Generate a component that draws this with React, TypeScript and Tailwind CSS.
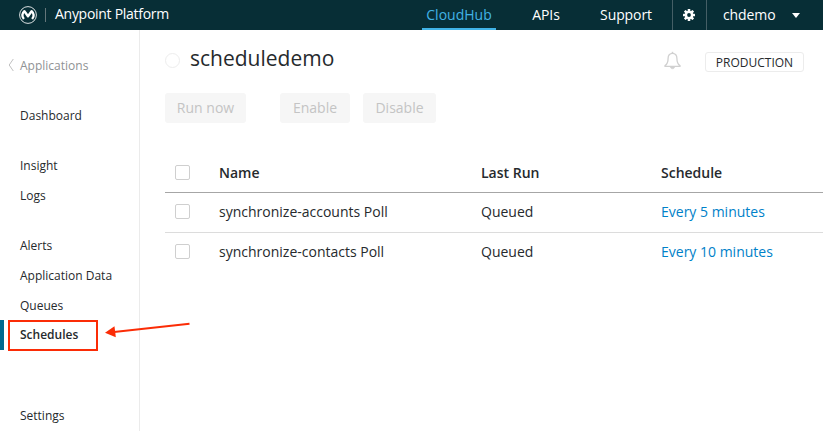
import React from "react";

type Row = { name: string; lastRun: string; schedule: string };

const rows: Row[] = [
  { name: "synchronize-accounts Poll", lastRun: "Queued", schedule: "Every 5 minutes" },
  { name: "synchronize-contacts Poll", lastRun: "Queued", schedule: "Every 10 minutes" },
];

const groups: string[][] = [
  ["Dashboard"],
  ["Insight", "Logs"],
  ["Alerts", "Application Data", "Queues", "Schedules"],
];

function Logo() {
  return (
    <svg width="18" height="18" viewBox="0 0 18 18" fill="none" stroke="#fff">
      <circle cx="9" cy="9" r="8.4" strokeWidth="1" opacity="0.85" />
      <path d="M4.9 13C2.6 10.4 3 7.2 5.4 5.2L9 10.2L12.6 5.2C15 7.2 15.4 10.4 13.1 13" strokeWidth="2.4" strokeLinejoin="round" />
    </svg>
  );
}

function Gear() {
  return (
    <svg className="mr-px" width="12" height="12" viewBox="0 0 12 12">
      <g fill="#fff">
        <rect x="4.7" y="0" width="2.6" height="12" rx="0.5" />
        <rect x="4.7" y="0" width="2.6" height="12" rx="0.5" transform="rotate(45 6 6)" />
        <rect x="4.7" y="0" width="2.6" height="12" rx="0.5" transform="rotate(90 6 6)" />
        <rect x="4.7" y="0" width="2.6" height="12" rx="0.5" transform="rotate(135 6 6)" />
        <circle cx="6" cy="6" r="4.3" />
      </g>
      <circle cx="6" cy="6" r="1.9" fill="#072e36" />
    </svg>
  );
}

function Bell() {
  return (
    <svg width="17" height="19" viewBox="0 0 17 19" fill="none" stroke="#d0d0d0" strokeWidth="1.3">
      <path d="M8.5 2.4C5.6 2.4 4.1 4.5 4.1 7.2C4.1 11.5 3.2 13.2 1 14.6V15.4H16V14.6C13.8 13.2 12.9 11.5 12.9 7.2C12.9 4.5 11.4 2.4 8.5 2.4Z" strokeLinejoin="round" />
      <path d="M8.5 2.4V0.8" strokeWidth="1.6" />
      <path d="M6.2 15.8C6.5 17.2 7.3 17.8 8.5 17.8S10.5 17.2 10.8 15.8Z" fill="#d0d0d0" strokeWidth="0.5" />
    </svg>
  );
}

function Checkbox() {
  return <span role="checkbox" aria-checked="false" className="block size-[15px] rounded-[2px] border border-[#cfcfcf] bg-white" />;
}

function TopBar() {
  return (
    <header className="flex h-[30px] shrink-0 items-stretch bg-[#072e36] text-sm leading-[30px] text-white">
      <div className="flex items-center pl-[19px]">
        <Logo />
        <span className="ml-2 h-[14px] w-px bg-[#64767a]" />
        <span className="ml-[9px] h-[30px] w-[116px] text-sm leading-[28px] tracking-[-0.28px] whitespace-nowrap">Anypoint Platform</span>
      </div>
      <nav className="ml-auto flex items-stretch">
        <a className="w-[74px] border-b-2 border-[#41b3e6] text-center text-[#41b3e6]">CloudHub</a>
        <a className="w-[100px] text-center font-medium tracking-[-0.1px]">APIs</a>
        <a className="w-[60px] text-center font-medium tracking-[-0.1px]">Support</a>
      </nav>
      <div className="ml-4 flex w-[35px] items-center justify-center border-x border-[#455f66]">
        <Gear />
      </div>
      <div className="flex w-[116px] items-center pl-4">
        <span className="w-[53px] font-medium tracking-[-0.1px]">chdemo</span>
        <svg className="ml-4" width="8" height="5" viewBox="0 0 8 5" fill="#fff"><path d="M0 0H8L4 5Z" /></svg>
      </div>
    </header>
  );
}

function Sidebar() {
  return (
    <aside className="relative flex w-[140px] shrink-0 flex-col border-r border-[#ebebeb] pt-5 text-xs leading-[32px] text-[#262a2d]">
      <a className="mb-5 flex h-[30px] text-[#8f9294]">
        <svg className="mt-2 mr-[6px] ml-2" width="6" height="14" viewBox="0 0 6 14" fill="none" stroke="#c0c0c0"><path d="M5.3 1L1.2 7L5.3 13" /></svg>
        Applications
      </a>
      {groups.map((group) => (
        <div key={group[0]} className="mb-5">
          {group.map((item) =>
            item === "Schedules" ? (
              <a key={item} className="block h-[30px] border-l-4 border-[#00688f] pl-4 font-semibold leading-[29px]">{item}</a>
            ) : (
              <a key={item} className="block h-[30px] pl-5">{item}</a>
            ),
          )}
        </div>
      ))}
      <a className="mt-[30px] block h-[30px] pl-5">Settings</a>
      <div className="absolute top-[290px] left-2 h-[31px] w-[90px] border-2 border-[#fb2c06]" />
      <svg className="absolute top-[290px] left-[104px]" width="88" height="18" viewBox="0 0 88 18">
        <path d="M85.5 3.8L10 12" stroke="#fb2c06" strokeWidth="2" />
        <path d="M1 12.8L10.5 6.3L11.8 17.3Z" fill="#fb2c06" />
      </svg>
    </aside>
  );
}

function Action({ children, className }: { children: React.ReactNode; className: string }) {
  return <button disabled className={`h-[30px] rounded-[3px] bg-[#f6f6f6] text-center text-sm leading-[30px] text-[#c4c4c4] ${className}`}>{children}</button>;
}

export default function App() {
  return (
    <div className="flex h-[431px] w-[823px] flex-col overflow-hidden bg-white font-['Open_Sans','Noto_Sans',sans-serif] text-[#262a2d]">
      <TopBar />
      <div className="flex min-h-0 flex-1">
        <Sidebar />
        <main className="flex-1 pl-[25px]">
          <div className="flex h-[63px] items-start">
            <span className="mt-[23px] size-[15px] rounded-full border border-[#ededed]" />
            <h1 className="ml-[10px] mt-[13px] text-[21px] leading-[30px]">scheduledemo</h1>
            <div className="mt-[21px] ml-auto"><Bell /></div>
            <span className="mt-[22px] mr-[19px] ml-6 h-5 w-[99px] rounded-[3px] border border-[#ececec] text-center text-xs leading-[19px]">PRODUCTION</span>
          </div>
          <div className="flex">
            <Action className="w-[81px]">Run now</Action>
            <Action className="ml-[34px] w-[70px]">Enable</Action>
            <Action className="ml-[13px] w-[73px]">Disable</Action>
          </div>
          <div className="mt-[30px] text-sm">
            <div className="grid h-10 grid-cols-[54px_262px_180px_1fr] items-center border-b border-[#a6a6a6] font-semibold">
              <span className="pl-[10px]"><Checkbox /></span>
              <span>Name</span>
              <span>Last Run</span>
              <span>Schedule</span>
            </div>
            {rows.map((row, i) => (
              <div key={row.name} className={`grid h-10 grid-cols-[54px_262px_180px_1fr] items-center border-b pb-[2px] ${i === 0 ? "border-[#dcdcdc]" : "border-transparent"}`}>
                <span className="pl-[10px]"><Checkbox /></span>
                <span>{row.name}</span>
                <span>{row.lastRun}</span>
                <a className="text-[#0081c9]">{row.schedule}</a>
              </div>
            ))}
          </div>
        </main>
      </div>
    </div>
  );
}
